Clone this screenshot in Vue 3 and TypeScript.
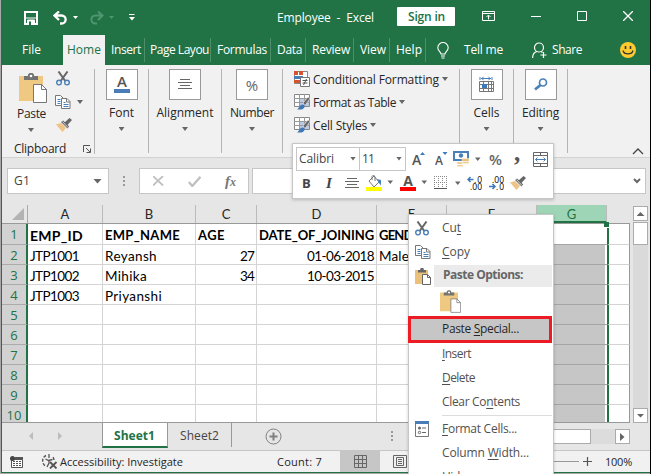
<script setup lang="ts">
import type { Directive } from 'vue'

interface Tab { name: string; cell: number; text: number }
interface Column { id: string; width: number }
interface Cell { text: string; fit: number; right?: boolean }
interface MenuItem { pre: string; key: string; post: string; fit: number }

// Spreads the glyphs of a label evenly over the given width.
const vFit: Directive<HTMLElement, number> = {
  mounted(el, { value }) {
    const chars = (el.textContent ?? '').length
    if (chars < 2) return
    const natural = el.getBoundingClientRect().width
    el.style.letterSpacing = `${(value - natural) / chars}px`
  },
}

const tabs: Tab[] = [
  { name: 'Insert', cell: 40, text: 30 },
  { name: 'Page Layou', cell: 66, text: 59 },
  { name: 'Formulas', cell: 60, text: 50 },
  { name: 'Data', cell: 35, text: 25 },
  { name: 'Review', cell: 48, text: 38 },
  { name: 'View', cell: 36, text: 26 },
  { name: 'Help', cell: 36, text: 26 },
]

const columns: Column[] = [
  { id: 'A', width: 75 },
  { id: 'B', width: 93 },
  { id: 'C', width: 61 },
  { id: 'D', width: 120 },
  { id: 'E', width: 70 },
  { id: 'F', width: 90 },
  { id: 'G', width: 70 },
]

const cells: Record<string, Cell> = {
  A1: { text: 'EMP_ID', fit: 53 },
  B1: { text: 'EMP_NAME', fit: 75 },
  C1: { text: 'AGE', fit: 27 },
  D1: { text: 'DATE_OF_JOINING', fit: 115 },
  E1: { text: 'GENDER', fit: 48 },
  A2: { text: 'JTP1001', fit: 49 },
  B2: { text: 'Reyansh', fit: 52 },
  C2: { text: '27', fit: 14, right: true },
  D2: { text: '01-06-2018', fit: 67, right: true },
  E2: { text: 'Male', fit: 30 },
  A3: { text: 'JTP1002', fit: 49 },
  B3: { text: 'Mihika', fit: 42 },
  C3: { text: '34', fit: 14, right: true },
  D3: { text: '10-03-2015', fit: 67, right: true },
  A4: { text: 'JTP1003', fit: 49 },
  B4: { text: 'Priyanshi', fit: 57 },
}

const lower: MenuItem[] = [
  { pre: '', key: 'I', post: 'nsert', fit: 29 },
  { pre: '', key: 'D', post: 'elete', fit: 33 },
  { pre: 'Clear Co', key: 'n', post: 'tents', fit: 78 },
]
</script>

<template>
  <svg class="defs" width="0" height="0">
    <symbol id="scissors" viewBox="0 0 14 15">
      <path d="M2.5 0.5L9.3 10M11.5 0.5L4.7 10" stroke="#666" stroke-width="2" fill="none" />
      <circle cx="3" cy="11.6" r="2.3" fill="none" stroke="#4a80b8" stroke-width="1.4" />
      <circle cx="11" cy="11.6" r="2.3" fill="none" stroke="#4a80b8" stroke-width="1.4" />
    </symbol>
    <symbol id="copy" viewBox="0 0 16 14">
      <path d="M.5.5h5l2.500 2.500v7.500h-7.500z" fill="#fff" stroke="#777" />
      <path d="M2.500 4.500h3M2.500 6.500h3M2.500 8.500h3" stroke="#4a80b8" />
      <path d="M6.500 3.500h5.500l3 3v7h-8.500z" fill="#fff" stroke="#777" />
      <path d="M11.500 3.500v3.500h3.500" fill="none" stroke="#777" />
      <path d="M8.500 7.500h2M8.500 9.500h5M8.500 11.500h5" stroke="#4a80b8" />
    </symbol>
    <symbol id="paste" viewBox="0 0 28 30">
      <path d="M0 3h24v25H0z" fill="#efc881" />
      <path d="M5 7V3h4V1.500l1.500-1.500h3l1.500 1.500V3h4v4z" fill="#737373" />
      <circle cx="12" cy="3" r="1.300" fill="#fff" />
      <path d="M14.500 11.500h8l5 5v13h-13z" fill="#fff" stroke="#777" />
      <path d="M22.500 11.500v5h5" fill="none" stroke="#777" />
    </symbol>
    <symbol id="pastesmall" viewBox="0 0 16 17">
      <path d="M0 2h13v14H0z" fill="#eac07b" />
      <path d="M3 4.500V2h2.200V.8L6 0h2l.8.8V2H11v2.500z" fill="#666" />
      <path d="M7.500 6.500h5l3 3v7h-8z" fill="#fff" stroke="#666" />
      <path d="M12.500 6.500v3h3" fill="none" stroke="#666" />
    </symbol>
    <symbol id="brush" viewBox="0 0 16 14">
      <path d="M0 6.500l5-1.500 5 5-3.500 4z" fill="#efc386" />
      <path d="M5 4l2.200-1.500 6 6-1.700 2z" fill="#666" />
      <path d="M8 5l5.500-5 2.500 2-5 5.500z" fill="#666" />
      <path d="M6.500 3.500l5.500 6" stroke="#fff" stroke-width=".7" />
    </symbol>
    <symbol id="tablebrush" viewBox="0 0 16 16">
      <path d="M.5.5h15v12H.5z" fill="#fff" stroke="#888" />
      <path d="M5 4h10v8H5z" fill="#b9cbe5" />
      <path d="M0 4.500h15M0 8.500h15M5.500 0v13M10.500 0v13" stroke="#999" />
      <path d="M9 9l5-6 2 1.500-5 7z" fill="#666" stroke="#f1f1f1" stroke-width=".6" />
      <path d="M3 15.500c2-1 2.500-5 5.500-5s3 4-1 5z" fill="#3f78b8" />
    </symbol>
  </svg>

  <main class="desktop">
    <div class="window">
      <header class="titlebar">
        <svg class="save" width="14" height="14" viewBox="0 0 14 14">
          <path d="M1 1h12v12H1z" fill="none" stroke="#fff" stroke-width="2" />
          <path d="M2 7h10M3.500 9h7v4h-7z" stroke="#fff" fill="#fff" />
          <path d="M5 10.500h2V14H5z" fill="#217346" />
        </svg>
        <svg class="undo" width="25" height="14" viewBox="0 0 25 14">
          <path d="M6 .5L1.500 4.500 6 9M2 4.500h6.500c5.500 0 5.500 8 0 8H7" fill="none" stroke="#fff" stroke-width="2.300" />
          <path d="M20 5h5l-2.500 3z" fill="#fff" />
        </svg>
        <svg class="redo" width="25" height="14" viewBox="0 0 25 14">
          <path d="M9 .5l4.500 4L9 9M13 4.500H6.500c-5.500 0-5.500 8 0 8H8" fill="none" stroke="#4f9670" stroke-width="2" />
          <path d="M20 5h5l-2.500 3z" fill="#4f9670" />
        </svg>
        <svg class="custom" width="6" height="7" viewBox="0 0 6 7"><path d="M0 .5h5.500" stroke="#fff" /><path d="M0 3h6L3 6.500z" fill="#fff" /></svg>
        <div class="caption"><span v-fit="97" class="t">Employee&nbsp; - &nbsp;Excel</span></div>
        <button class="signin"><span v-fit="37" class="t">Sign in</span></button>
        <svg class="display" width="13" height="11" viewBox="0 0 13 11" fill="none" stroke="#fff"><path d="M.5.500h12v9H.5zM.5 2.500h12M6.500 8.500v-4M4.500 6l2-2 2 2" /></svg>
        <svg class="min" width="10" height="10" viewBox="0 0 10 10"><path d="M0 5.500h10" stroke="#fff" /></svg>
        <svg class="max" width="10" height="10" viewBox="0 0 10 10"><path d="M.5.500h9v9h-9z" fill="none" stroke="#fff" /></svg>
        <svg class="close" width="10" height="10" viewBox="0 0 10 10"><path d="M0 0l10 10M10 0L0 10" stroke="#fff" stroke-width="1.300" /></svg>
      </header>

      <nav class="tabs">
        <span class="file"><span v-fit="19" class="t">File</span></span>
        <span class="tab home"><span v-fit="34" class="t">Home</span></span>
        <span v-for="t in tabs" :key="t.name" class="tab" :class="{ wide: t.cell > 60 }" :style="{ width: `${t.cell}px` }"><span v-fit="t.text" class="t">{{ t.name }}</span></span>
        <svg class="bulb" width="12" height="17" viewBox="0 0 12 17" fill="none" stroke="#fff" stroke-width="1.100"><path d="M4 12c0-2-3.200-3-3.200-6.300a5.200 5.200 0 0 1 10.400 0C11.200 9 8 10 8 12zM4 14h4M4.500 16h3" /></svg>
        <span v-fit="39" class="t tell">Tell me</span>
        <svg class="person" width="15" height="17" viewBox="0 0 15 17" fill="none" stroke="#fff" stroke-width="1.200"><circle cx="7" cy="5.500" r="4.500" /><path d="M.6 16c0-3.500 2-6 4.500-6.500M9 9.500l1.500 1M11.500 10v6M8.500 13h6" /></svg>
        <span v-fit="30" class="t">Share</span>
        <svg class="smile" width="16" height="16" viewBox="0 0 16 16"><circle cx="8" cy="8" r="8" fill="#fecb2f" /><path d="M5.500 4v3M10.500 4v3" stroke="#333" stroke-width="1.600" /><path d="M3 8.500c1 4.500 9 4.500 10 0" fill="none" stroke="#333" stroke-width="1.200" /></svg>
      </nav>

      <section class="ribbon">
        <div class="group clipboard">
          <div class="cliptop">
            <div class="pastecol">
              <svg width="28" height="30"><use href="#paste" /></svg>
              <span v-fit="29" class="t">Paste</span>
              <i class="arrow"></i>
            </div>
            <div class="clipicons">
              <svg width="14" height="15"><use href="#scissors" /></svg>
              <div class="copyrow"><svg width="16" height="14"><use href="#copy" /></svg><i class="arrow"></i></div>
              <svg width="16" height="14"><use href="#brush" /></svg>
            </div>
          </div>
          <div class="clipfoot">
            <span v-fit="52" class="t">Clipboard</span>
            <svg width="8" height="8" viewBox="0 0 8 8" fill="none" stroke="#555"><path d="M.5 7V.5H7M3 3l4 4M7.500 3.500v4h-4" /></svg>
          </div>
        </div>
        <div class="group font">
          <div class="box"><svg width="16" height="20" viewBox="0 0 16 20"><path d="M0 14h16v4H0z" fill="#4a7db8" /><text x="8" y="12" text-anchor="middle" font-family="Open Sans, sans-serif" font-weight="600" font-size="15" fill="#555">A</text></svg></div>
          <span v-fit="25" class="t">Font</span><i class="arrow"></i>
        </div>
        <div class="group align">
          <div class="box"><svg width="14" height="11" viewBox="0 0 14 11" stroke="#666"><path d="M2 .5h10M0 3.500h14M2 6.500h10M0 9.500h14" /></svg></div>
          <span v-fit="57" class="t">Alignment</span><i class="arrow"></i>
        </div>
        <div class="group number">
          <div class="box"><span class="percent">%</span></div>
          <span v-fit="44" class="t">Number</span><i class="arrow"></i>
        </div>
        <div class="group styles">
          <div class="stylerow">
            <svg width="16" height="16" viewBox="0 0 16 16"><path d="M.5.500h13v12H.5z" fill="#fff" stroke="#888" /><path d="M0 0h4v4H0zM5 0h4v4H5zM0 9h6v3H0z" fill="#d6532f" /><path d="M0 5h9v3H0z" fill="#4a7db8" /><path d="M6.500 6.500h9v9h-9z" fill="#fff" stroke="#777" /><path d="M8.500 9.500h5M8.500 12h5M12.500 8l-3 6" stroke="#555" /></svg>
            <span v-fit="126" class="t">Conditional Formatting</span><i class="arrow"></i>
          </div>
          <div class="stylerow"><svg width="16" height="16"><use href="#tablebrush" /></svg><span v-fit="83" class="t">Format as Table</span><i class="arrow"></i></div>
          <div class="stylerow"><svg width="16" height="16"><use href="#tablebrush" /></svg><span v-fit="54" class="t">Cell Styles</span><i class="arrow"></i></div>
        </div>
        <div class="group cells">
          <div class="box"><svg width="16" height="17" viewBox="0 0 16 17" fill="none"><path d="M1 1v3M13 1v3M2 2.500h10M4.500 .8L3 2.500l1.500 1.700M9.500.8L11 2.500 9.500 4.200" stroke="#4a80b8" /><path d="M.5 5.500h14v10H.5zM.5 8.500h14M.5 12.500h14M4.500 5.500v10M9.500 5.500v10M12.500 5.500v10" stroke="#777" /><path d="M3 8h5v4H3z" fill="#3f7ab8" /></svg></div>
          <span v-fit="26" class="t">Cells</span><i class="arrow"></i>
        </div>
        <div class="group editing">
          <div class="box"><svg width="14" height="13" viewBox="0 0 14 13" fill="none" stroke="#4a80b8"><circle cx="9" cy="4.500" r="3.500" stroke-width="1.700" /><path d="M6.500 7L1 11.500" stroke-width="2.800" /></svg></div>
          <span v-fit="37" class="t">Editing</span><i class="arrow"></i>
        </div>
        <svg class="collapse" width="12" height="7" viewBox="0 0 12 7"><path d="M1 6l5-5 5 5" fill="none" stroke="#444" stroke-width="1.300" /></svg>
      </section>

      <section class="formula">
        <div class="namebox"><span v-fit="16" class="t">G1</span><i class="arrow big"></i></div>
        <div class="grip"><b></b><b></b><b></b></div>
        <div class="fx">
          <svg width="11" height="10" viewBox="0 0 11 10"><path d="M0 0l10 9.500M10 0L0 9.500" stroke="#c0c0c0" stroke-width="1.800" /></svg>
          <svg width="13" height="11" viewBox="0 0 13 11"><path d="M.8 6l3.500 4L12.500.8" stroke="#c0c0c0" stroke-width="2.300" fill="none" /></svg>
          <span class="fn">f<small>x</small></span>
        </div>
        <div class="entry"><svg width="8" height="6" viewBox="0 0 8 6"><path d="M1 1l3 3 3-3" fill="none" stroke="#666" stroke-width="2" /></svg></div>
      </section>

      <section class="sheet">
        <div class="gridarea">
          <div class="colheads">
            <span class="corner"><svg width="12" height="12" viewBox="0 0 12 12"><path d="M12 0v12H0z" fill="#b3b3b3" /></svg></span>
            <span v-for="c in columns" :key="c.id" class="colhead" :class="{ picked: c.id === 'G' }" :style="{ width: `${c.width}px` }">{{ c.id }}</span>
          </div>
          <div v-for="r in 10" :key="r" class="row" :class="{ first: r === 1 }">
            <span class="rowhead">{{ r }}</span>
            <span v-for="c in columns" :key="c.id" class="cell" :class="{ right: cells[c.id + r]?.right, shaded: c.id === 'G', large: c.id + r === 'A1' }" :style="{ width: `${c.width}px` }">
              <span v-if="cells[c.id + r]" v-fit="cells[c.id + r].fit" class="ct">{{ cells[c.id + r].text }}</span>
            </span>
            <span class="cell rest"></span>
          </div>
          <i class="handle"></i>
        </div>
        <div class="vscroll">
          <span class="sb"><i class="tri up"></i></span>
          <span class="thumb"></span>
          <span class="track"></span>
          <span class="sb"><i class="tri"></i></span>
        </div>
      </section>

      <section class="sheettabs">
        <div class="arrows"><svg width="34" height="8" viewBox="0 0 34 8" fill="#bcbcbc"><path d="M4 0v8L0 4zM29 0v8l4-4z" /></svg></div>
        <span class="stab active"><span v-fit="41" class="t">Sheet1</span></span>
        <span class="stab"><span v-fit="39" class="t">Sheet2</span></span>
        <svg class="add" width="17" height="17" viewBox="0 0 17 17" fill="none" stroke="#808080"><circle cx="8.500" cy="8.500" r="7.500" /><path d="M8.500 4.500v8M4.500 8.500h8" stroke-width="2" /></svg>
        <div class="grip tabgrip"><b></b><b></b><b></b></div>
        <span class="hthumb"></span>
        <span class="htrack"></span>
        <span class="hright"><svg width="5" height="8" viewBox="0 0 5 8"><path d="M0 0v8l4.500-4z" fill="#666" /></svg></span>
      </section>

      <footer class="status">
        <svg class="macro" width="13" height="12" viewBox="0 0 13 12"><path d="M1.500 3.500h11v8h-11z" fill="#fff" stroke="#555" /><path d="M5 1h8v2.500H5z" fill="#555" /><circle cx="2.500" cy="2.500" r="2.500" fill="#444" /><path d="M3 5.500h8.500M3 7.500h8.500M3 9.500h8.500" stroke="#555" stroke-dasharray="2 1" /></svg>
        <svg class="access" width="17" height="15" viewBox="0 0 17 15" fill="none" stroke="#555"><path d="M5 1.500A6 6 0 0 0 4.500 12M13 6a6 6 0 0 0-2-4" stroke-width="1.400" stroke-dasharray="3 1.500" /><path d="M8 0v4M4.500 5l3 1.500 4-1M8 6v3l-2 4" stroke-width="1.300" /><path d="M9 8l6.500 6.500M15.500 8L9 14.500" stroke-width="1.800" /></svg>
        <span v-fit="123" class="t">Accessibility: Investigate</span>
        <span v-fit="45" class="t count">Count: 7</span>
        <span class="view on"><svg width="13" height="13" viewBox="0 0 13 13" fill="none" stroke="#666"><path d="M.5.500h12v12H.5zM.5 4.500h12M.5 8.500h12M4.500.5v12M8.500.5v12" /></svg></span>
        <span class="view"><svg width="14" height="13" viewBox="0 0 14 13" fill="none" stroke="#666"><path d="M.5.500h13v12H.5zM3.500 2.500h7v8h-7zM5 4.500h4M5 6.500h4M5 8.500h4" /></svg></span>
        <span class="slider"></span>
        <svg width="9" height="9" viewBox="0 0 9 9"><path d="M4.500 0v9M0 4.500h9" stroke="#555" stroke-width="1.200" /></svg>
        <span v-fit="27" class="t zoom">100%</span>
      </footer>
    </div>
    <div class="edge"></div>

    <aside class="mini">
      <div class="minirow top">
        <span class="combo name"><span v-fit="35" class="t">Calibri</span><i class="arrow"></i></span>
        <span class="combo size"><span v-fit="12" class="t">11</span><i class="arrow"></i></span>
        <svg class="grow" width="14" height="16" viewBox="0 0 14 16"><text x="0" y="14" font-family="Open Sans, sans-serif" font-weight="600" font-size="14" fill="#555">A</text><path d="M8 4l2.500-3L13 4z" fill="#3f78b8" /></svg>
        <svg class="shrink" width="13" height="16" viewBox="0 0 13 16"><text x="0" y="14" font-family="Open Sans, sans-serif" font-weight="600" font-size="12" fill="#555">A</text><path d="M7.500 1h5L10 4z" fill="#3f78b8" /></svg>
        <svg class="money" width="27" height="16" viewBox="0 0 27 16"><path d="M1 1h14v8H1z" fill="#fff" stroke="#4a80b8" stroke-width="2" /><circle cx="8" cy="4.500" r="2.200" fill="#4a80b8" /><path d="M9 7.500h7v3H9zM4 11h6v2H4zM9 11h7v1.500H9zM4 14h6v1.500H4z" fill="#eac07b" stroke="#fff" stroke-width=".4" /><path d="M22 6.500h5.500l-2.700 3.500z" fill="#666" /></svg>
        <span class="pct">%</span>
        <span class="comma">,</span>
        <svg class="merge" width="15" height="15" viewBox="0 0 15 15" fill="none" stroke="#666"><path d="M.5.500h14v14H.5zM.5 3.500h14M.5 11.500h14M7.500.5v3M7.500 11.500v3" /><path d="M2.500 7.500h10M4.500 5.500l-2 2 2 2M10.500 5.500l2 2-2 2" stroke="#4a80b8" /></svg>
      </div>
      <div class="minirow bottom">
        <b class="bold">B</b>
        <i class="italic">I</i>
        <svg class="center" width="14" height="11" viewBox="0 0 14 11" stroke="#666"><path d="M2 .5h10M0 3.500h14M2 6.500h10M0 9.500h14" /></svg>
        <svg class="fill" width="28" height="16" viewBox="0 0 28 16"><path d="M3 6l5-5 5 6-5 5z" fill="#fff" stroke="#777" /><path d="M6 5V1.500L7.500 0 9 2v4" fill="none" stroke="#777" /><path d="M11 4l4 1v5.500l-2.500-3z" fill="#4a80b8" /><path d="M0 12h16v4H0z" fill="#ff0" /><path d="M21.500 5.500H27L24.300 9z" fill="#666" /></svg>
        <svg class="color" width="28" height="16" viewBox="0 0 28 16"><text x="8" y="11" text-anchor="middle" font-family="Open Sans, sans-serif" font-weight="700" font-size="14" fill="#555">A</text><path d="M0 12h16v4H0z" fill="#f00" /><path d="M21.500 5.500H27L24.300 9z" fill="#666" /></svg>
        <svg class="border" width="27" height="14" viewBox="0 0 27 14"><path d="M.5 0v12M4.500 0v12M8.500 0v12M12.500 0v12M0 .5h13M0 6.500h13" stroke="#888" stroke-dasharray="1 1" /><path d="M0 12.500h13" stroke="#555" /><path d="M21 5.500h5.500L23.800 9z" fill="#666" /></svg>
        <svg class="dec" width="15" height="14" viewBox="0 0 15 14"><path d="M6.500 3.500H1M3.500 1L1 3.500 3.500 6" fill="none" stroke="#3f78b8" stroke-width="1.500" /><text x="7" y="6.500" textLength="8" font-size="8.500">.0</text><text x="3" y="13.500" textLength="12" font-size="8.500">.00</text></svg>
        <svg class="inc" width="15" height="14" viewBox="0 0 15 14"><path d="M0 10.500h6M3.500 8L6 10.500 3.500 13" fill="none" stroke="#3f78b8" stroke-width="1.500" /><text x="3" y="6.500" textLength="12" font-size="8.500">.00</text><text x="7" y="13.500" textLength="8" font-size="8.500">.0</text></svg>
        <svg width="16" height="14"><use href="#brush" /></svg>
      </div>
    </aside>

    <aside class="menu">
      <div class="item"><span class="ico"><svg width="14" height="15"><use href="#scissors" /></svg></span><span v-fit="19" class="t">Cu<u>t</u></span></div>
      <div class="item"><span class="ico"><svg width="16" height="14"><use href="#copy" /></svg></span><span v-fit="28" class="t"><u>C</u>opy</span></div>
      <div class="item options"><span class="ico"><svg width="16" height="17"><use href="#pastesmall" /></svg></span><span class="band"><b v-fit="80" class="t">Paste Options:</b></span></div>
      <div class="choices"><svg width="21" height="23"><use href="#paste" /></svg></div>
      <div class="special"><span v-fit="77" class="t">Paste <u>S</u>pecial...</span></div>
      <div v-for="m in lower" :key="m.key" class="item"><span class="ico"></span><span v-fit="m.fit" class="t">{{ m.pre }}<u>{{ m.key }}</u>{{ m.post }}</span></div>
      <hr />
      <div class="item"><span class="ico"><svg width="14" height="16" viewBox="0 0 14 16"><path d="M.5.500h13v15H.5z" fill="#fff" stroke="#777" /><path d="M0 0h14v3H0z" fill="#4a7db8" /><circle cx="4.500" cy="7" r="1.500" fill="#666" /><circle cx="4.500" cy="11.500" r="1.200" fill="none" stroke="#666" /><path d="M7 7h4M7 11.500h4" stroke="#666" /></svg></span><span v-fit="75" class="t"><u>F</u>ormat Cells...</span></div>
      <div class="item"><span class="ico"></span><span v-fit="87" class="t">Column <u>W</u>idth...</span></div>
      <div class="item"><span class="ico"></span><span v-fit="24" class="t"><u>H</u>ide</span></div>
    </aside>
  </main>
</template>

<style>
body { margin: 0; overflow: hidden; }
</style>

<style scoped>
* { box-sizing: border-box; }
svg { display: block; flex: none; }
.defs { position: absolute; }
.desktop { position: relative; display: flex; width: 651px; height: 474px; overflow: hidden; background: #a8a8a8; font: 12px/16px "Open Sans", "Noto Sans", sans-serif; color: #262626; }
.window { width: 649px; height: 473px; margin-left: 1px; border-left: 1px solid #217346; border-bottom: 1px solid #217346; display: flex; flex-direction: column; background: #e6e6e6; }
.edge { width: 1px; background: #000; }
.t { display: inline-block; flex: none; white-space: nowrap; }
.arrow { flex: none; width: 6px; height: 4px; background: #666; clip-path: polygon(0 0, 100% 0, 50% 100%); }
.arrow.big { width: 9px; height: 5px; }

.titlebar { height: 35px; flex: none; display: flex; align-items: center; background: #217346; color: #fff; }
.save { margin-left: 22px; }
.undo { margin-left: 15px; }
.redo { margin-left: 11px; }
.custom { margin-left: 15px; }
.caption { margin-left: 142px; width: 120px; }
.signin { width: 58px; height: 19px; margin: -2px 0 0; padding: 0 0 0 11px; border: 0; border-radius: 1px; background: #fff; color: #217346; font: 600 12px/18px "Open Sans", sans-serif; text-align: left; }
.display { margin: -2px 0 0 27px; }
.min { margin: -3px 0 0 36px; }
.max { margin: -3px 0 0 36px; }
.close { margin: -3px 0 0 36px; }

.tabs { height: 30px; flex: none; display: flex; align-items: center; background: #217346; color: #fff; }
.file { width: 61px; padding-left: 20px; }
.tab { height: 24px; padding-left: 6px; line-height: 23px; overflow: hidden; border-right: 1px solid #4e8f6b; display: flex; }
.tab.wide { padding-left: 5px; }
.tab.home { width: 42px; height: 30px; padding-left: 4px; line-height: 29px; background: #f1f1f1; color: #217346; border: 0; font-weight: 500; }
.bulb { margin-left: 11px; }
.tell { margin-left: 15px; }
.person { margin: 0 5px 0 29px; }
.smile { margin-left: 38px; }

.ribbon { height: 93px; flex: none; display: flex; padding-top: 4px; background: #f1f1f1; border-bottom: 1px solid #d2d2d2; }
.group { height: 84px; flex: none; display: flex; flex-direction: column; align-items: center; border-right: 1px solid #b4b4b4; }
.group > .t { margin: 4px 0 5px; line-height: 18px; }
.clipboard { width: 93px; height: 88px; align-items: stretch; border-image: linear-gradient(#b4b4b4 84px, transparent 0) 1; }
.cliptop { display: flex; height: 72px; flex: none; }
.pastecol { width: 53px; flex: none; padding: 4px 0 0 14px; display: flex; flex-direction: column; align-items: flex-start; }
.pastecol svg { margin-left: 3px; }
.pastecol .t { margin: 2px 0 5px 1px; line-height: 18px; }
.pastecol .arrow { margin-left: 12px; }
.clipicons { padding-top: 2px; display: flex; flex-direction: column; align-items: flex-start; }
.clipicons > svg { margin-left: 1px; }
.copyrow { display: flex; align-items: center; gap: 6px; margin: 9px 0 9px; }
.clipfoot { display: flex; align-items: center; height: 16px; padding-left: 12px; gap: 17px; }
.font { width: 54px; }
.align { width: 73px; }
.number { width: 61px; }
.styles { width: 177px; align-items: flex-start; padding: 2px 0 0 11px; gap: 7px; }
.cells, .editing { width: 54px; }
.box { width: 32px; height: 31px; flex: none; border: 1px solid #999; background: #fff; display: flex; align-items: center; justify-content: center; color: #666; }
.percent { font-size: 15px; }
.stylerow { display: flex; align-items: center; height: 16px; }
.stylerow .t { margin: 1px 3px 0 3px; }
.collapse { margin: 79px 0 0 64px; }

.formula { height: 47px; flex: none; padding: 10px 0 0 5px; display: flex; }
.namebox { width: 102px; height: 26px; display: flex; align-items: center; justify-content: space-between; padding: 0 6px; background: #fff; border: 1px solid #c6c6c6; color: #444; }
.grip { width: 30px; height: 26px; display: flex; flex-direction: column; align-items: center; justify-content: center; gap: 2px; }
.grip b { width: 2px; height: 2px; background: #999; }
.fx { width: 110px; height: 26px; padding: 0 12px 0 13px; display: flex; align-items: center; justify-content: space-between; background: #fff; border: 1px solid #c6c6c6; }
.fn { font: italic bold 15px/20px "Liberation Serif", serif; color: #777; }
.fn small { font-size: 12px; }
.entry { width: 394px; height: 26px; margin-left: 3px; padding-right: 4px; display: flex; align-items: center; justify-content: flex-end; background: #fff; border: 1px solid #c6c6c6; }

.sheet { height: 218px; flex: none; display: flex; font-family: Lato, "Open Sans", sans-serif; }
.gridarea { position: relative; width: 628px; overflow: hidden; border-bottom: 1px solid #999; }
.colheads { display: flex; height: 19px; border-bottom: 1px solid #999; }
.corner { width: 26px; flex: none; border-right: 1px solid #aaa; padding: 3px 3px 0 10px; }
.colhead { flex: none; border-right: 1px solid #bbb; text-align: center; font-size: 13px; line-height: 18px; }
.colhead.picked { background: #9fd5b7; color: #217346; border-bottom: 2px solid #217346; }
.row { display: flex; height: 20px; }
.row.first { height: 21px; }
.rowhead { width: 26px; flex: none; border-right: 2px solid #217346; border-bottom: 1px solid #ababab; background: #d2d2d2; color: #217346; text-align: center; font: 13px/21px "Open Sans", sans-serif; }
.cell { flex: none; padding: 0 2px; border-right: 1px solid #d4d4d4; border-bottom: 1px solid #d4d4d4; background: #fff; color: #000; font-size: 13.500px; line-height: 22px; overflow: hidden; white-space: nowrap; }
.first .cell { font-weight: bold; font-size: 13px; line-height: 23px; }
.first .cell.large { font-size: 14px; }
.ct { display: inline-block; }
.right { text-align: right; }
.shaded { background: #c6c6c6; border-bottom-color: #a5a5a5; border-right: 0; box-shadow: inset -2px 0 #fff; }
.first .shaded { background: #fff; }
.rest { flex: 1; border-left: 2px solid #217346; border-right-color: #999; }
.handle { position: absolute; left: 602px; top: 17px; width: 5px; height: 6px; background: #217346; border-bottom: 1px solid #fff; }
.vscroll { width: 15px; margin: 1px 0 0 3px; display: flex; flex-direction: column; }
.sb { height: 15px; display: flex; align-items: center; justify-content: center; border: 1px solid #ababab; background: #fff; }
.tri { width: 8px; height: 4px; background: #666; clip-path: polygon(0 0, 100% 0, 50% 100%); }
.tri.up { transform: scaleY(-1); }
.thumb { height: 23px; margin-top: 1px; border: 1px solid #ababab; background: #fff; }
.track { flex: 1; background: #dadada; }

.sheettabs { height: 27px; flex: none; display: flex; }
.arrows { width: 100px; padding: 9px 0 0 27px; }
.stab { height: 24px; padding: 5px 0 0 12px; color: #444; width: 64px; border-right: 1px solid #999; }
.stab.active { margin-top: -1px; width: 66px; height: 26px; padding: 6px 0 0 11px; background: #fff; color: #217346; font-weight: bold; border: 1px solid #999; border-top: 0; border-bottom: 2px solid #217346; }
.add { margin: 5px 0 0 33px; }
.tabgrip { width: 4px; margin: 0 0 0 108px; }
.hthumb { width: 180px; height: 15px; margin: 6px 0 0 17px; border: 1px solid #ababab; background: #fff; }
.htrack { width: 24px; height: 15px; margin-top: 6px; background: #dcdcdc; }
.hright { width: 15px; height: 15px; margin: 6px 0 0; display: flex; align-items: center; justify-content: center; border: 1px solid #ababab; background: #fff; }

.status { height: 22px; flex: none; display: flex; align-items: center; border-top: 1px solid #c6c6c6; background: #f1f1f1; font-size: 11px; }
.macro { margin-left: 8px; }
.access { margin: 0 2px 0 18px; }
.count { margin: 0 18px 0 94px; }
.view { width: 40px; height: 21px; display: flex; align-items: center; justify-content: center; }
.view.on { background: #c6c6c6; }
.slider { width: 159px; height: 1px; margin-right: 4px; background: #999; }
.zoom { margin-left: 13px; }

.mini { position: absolute; left: 292px; top: 143px; width: 262px; height: 56px; padding: 3px; background: #fff; border: 1px solid #c6c6c6; box-shadow: 0 1px 3px #0003; }
.minirow { display: flex; align-items: center; height: 24px; color: #444; }
.combo { height: 24px; flex: none; display: flex; align-items: center; justify-content: space-between; padding: 0 3px 1px 2px; border: 1px solid #c6c6c6; }
.name { width: 64px; }
.size { width: 47px; margin-left: -1px; }
.grow { margin-left: 6px; }
.shrink { margin-left: 9px; }
.money { margin-left: 5px; overflow: visible; }
.pct { width: 14px; margin-left: 9px; font-size: 15px; font-weight: 600; color: #666; }
.comma { width: 8px; margin: -13px 0 0 11px; font: bold 25px/20px "Liberation Serif", serif; color: #555; }
.merge { margin-left: 11px; }
.bold { width: 10px; margin-left: 6px; font-size: 13px; }
.italic { width: 10px; margin-left: 14px; font: italic bold 15px/20px "Liberation Serif", serif; }
.center { margin-left: 9px; }
.fill { margin: 0 0 0 7px; }
.color { margin-left: 6px; }
.border { margin-left: 6px; }
.dec { margin-left: 6px; }
.inc { margin: 0 6px 0 7px; }

.menu { position: absolute; left: 408px; top: 214px; width: 146px; height: 262px; padding: 1px 0 0; background: #fff; border: 1px solid #c6c6c6; box-shadow: 0 1px 3px #0003; color: #505050; }
.item { height: 24px; display: flex; align-items: center; }
.ico { width: 33px; flex: none; padding-left: 6px; }
.menu u { text-underline-offset: 2px; text-decoration-thickness: 1px; }
.options .ico { width: 25px; }
.band { width: 118px; height: 22px; padding: 2px 0 0 9px; background: #ebebeb; color: #666; }
.choices { height: 28px; padding: 2px 0 0 31px; }
.special { height: 27px; width: 144px; margin: 0 0 -1px -1px; padding: 2px 0 0 31px; border: 3px solid #ed1c24; background: #c6c6c6; color: #262626; }
.menu hr { width: 110px; height: 1px; margin: 1px 1px 1px auto; border: 0; background: #dcdcdc; }
</style>
